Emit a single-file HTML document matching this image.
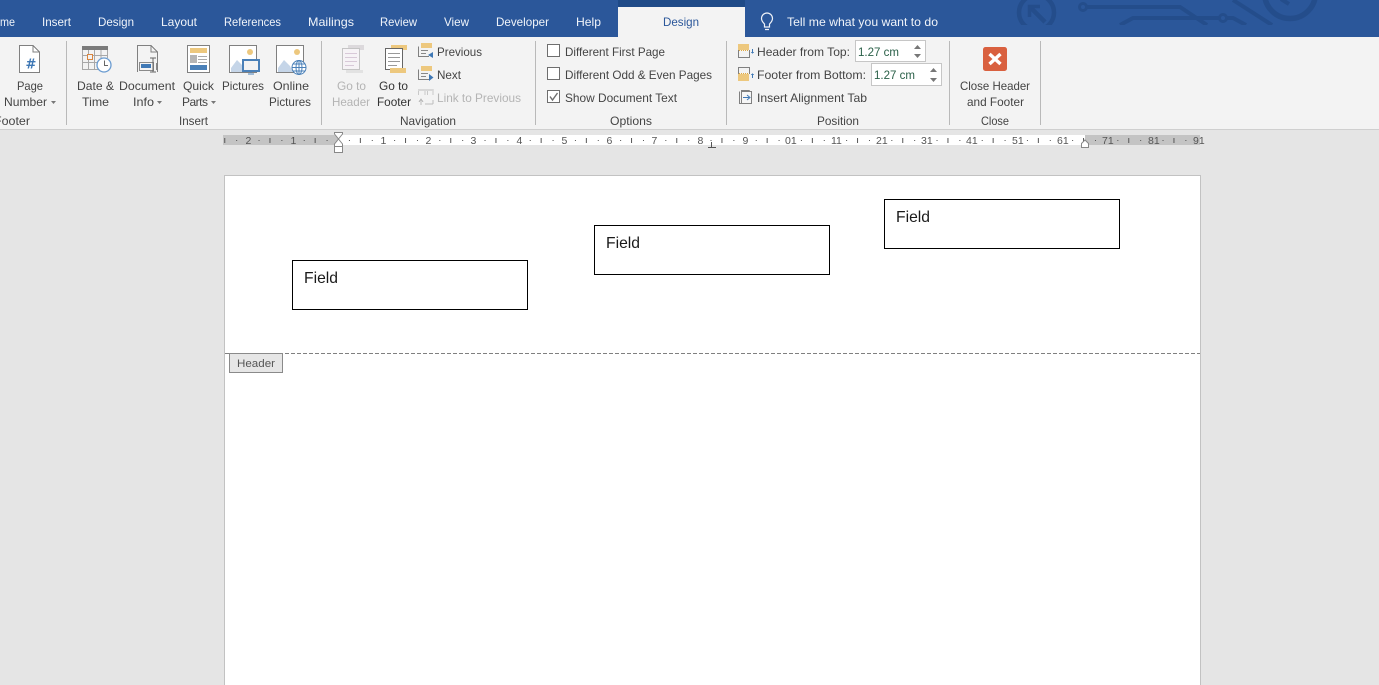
<!DOCTYPE html>
<html><head><meta charset="utf-8"><title>Word</title>
<style>
html,body{margin:0;padding:0;width:1379px;height:685px;overflow:hidden;background:#e5e5e5}
svg{display:block}
text{font-family:"Liberation Sans",sans-serif;font-size:12px;fill:#444}
.t{fill:#f0f4fa}
.g{fill:#b4b4b4}
.r{font-size:10.500px;fill:#555}
.f{font-size:16px;fill:#1a1a1a}
.i{fill:none;stroke:#808080;stroke-width:1}
</style></head><body>
<svg width="1379" height="685" viewBox="0 0 1379 685" xmlns="http://www.w3.org/2000/svg" shape-rendering="crispEdges">
<defs>
<pattern id="tk" width="45.2" height="10" patternUnits="userSpaceOnUse" patternTransform="translate(338 135)">
<rect x="11" y="5" width="1" height="1" fill="#555"/><rect x="22" y="3" width="1" height="5" fill="#555"/><rect x="34" y="5" width="1" height="1" fill="#555"/>
</pattern>
<clipPath id="tb"><rect x="745" y="0" width="634" height="25"/></clipPath>
</defs>
<rect width="1379" height="685" fill="#e5e5e5"/>
<rect width="1379" height="37" fill="#2b579a"/>
<rect x="618" y="0" width="127" height="7" fill="#1f4a87"/>
<rect x="618" y="7" width="127" height="30" fill="#f3f3f3"/>
<g clip-path="url(#tb)" fill="none" stroke="#244d8b" stroke-width="4" shape-rendering="auto">
<circle cx="1036.500" cy="12.500" r="17.500" stroke-width="4.500"/><path d="M1045 22L1031 8" stroke-width="4.500"/><path d="M1029.500 17V6.500H1040" stroke-width="3.500"/>
<circle cx="1083" cy="7" r="3.500" stroke-width="3"/><path d="M1087 7H1180L1207 25M1120 25L1133 18H1219M1227 18H1233L1246 25"/>
<circle cx="1223" cy="18" r="3.500" stroke-width="3"/><path d="M1233 0L1272 25"/>
<circle cx="1290" cy="-7" r="25.500" stroke-width="5.500"/><path d="M1281 -1L1289 4"/>
</g>
<g class="tabs">
<text class="t" x="0" y="26" textLength="15" lengthAdjust="spacingAndGlyphs">me</text>
<text class="t" x="42" y="26" textLength="29" lengthAdjust="spacingAndGlyphs">Insert</text>
<text class="t" x="98" y="26" textLength="36" lengthAdjust="spacingAndGlyphs">Design</text>
<text class="t" x="161" y="26" textLength="36" lengthAdjust="spacingAndGlyphs">Layout</text>
<text class="t" x="224" y="26" textLength="57" lengthAdjust="spacingAndGlyphs">References</text>
<text class="t" x="308" y="26" textLength="46" lengthAdjust="spacingAndGlyphs">Mailings</text>
<text class="t" x="380" y="26" textLength="37" lengthAdjust="spacingAndGlyphs">Review</text>
<text class="t" x="444" y="26" textLength="25" lengthAdjust="spacingAndGlyphs">View</text>
<text class="t" x="496" y="26" textLength="53" lengthAdjust="spacingAndGlyphs">Developer</text>
<text class="t" x="576" y="26" textLength="25" lengthAdjust="spacingAndGlyphs">Help</text>
<text x="663" y="26" textLength="36" lengthAdjust="spacingAndGlyphs" style="fill:#2b579a">Design</text>
<text class="t" x="787" y="26" textLength="151" lengthAdjust="spacingAndGlyphs">Tell me what you want to do</text>
</g>
<g fill="none" stroke="#eef2f8" stroke-width="1.200" shape-rendering="auto"><path d="M764.500 24C762 21.500 761.500 19.500 761.500 18.500A5.500 5.500 0 0 1 772.500 18.500C772.500 19.500 772 21.500 769.500 24V27H764.500ZM765 29.500H769"/></g>

<rect x="0" y="37" width="1379" height="92" fill="#f3f3f3"/>
<rect x="0" y="129" width="1379" height="1" fill="#cfcfcf"/>
<g fill="#b9b9b9">
<rect x="66" y="41" width="1" height="84"/><rect x="321" y="41" width="1" height="84"/><rect x="535" y="41" width="1" height="84"/><rect x="726" y="41" width="1" height="84"/><rect x="949" y="41" width="1" height="84"/><rect x="1040" y="41" width="1" height="84"/>
</g>

<!-- Page Number -->
<path d="M19.500 45.500H33L39.500 52V72.500H19.500Z" fill="#fff" stroke="#808080"/><path class="i" d="M33 45.500V52H39.500"/>
<text x="25.500" y="68.500" style="font-family:'DejaVu Sans',sans-serif;font-size:13px;font-weight:bold;fill:#3f78b5">#</text>
<text x="17" y="90" textLength="26" lengthAdjust="spacingAndGlyphs">Page</text>
<text x="4" y="106" textLength="43" lengthAdjust="spacingAndGlyphs">Number</text>
<path d="M51 101H56L53.500 104Z" fill="#777" shape-rendering="auto"/>
<text x="-6" y="125" textLength="36" lengthAdjust="spacingAndGlyphs">Footer</text>

<!-- Date Time -->
<rect x="82" y="46" width="26" height="4" fill="#7b7b7b"/>
<path d="M82.500 50V69.500H100M107.500 50V58M88.500 50V69M94.500 50V69M101 50V58M82 55.500H108M82 62.500H98" fill="none" stroke="#a8a8a8"/>
<rect x="87.500" y="54.500" width="5" height="5" fill="#f3f3f3" stroke="#d9853f"/>
<circle cx="104" cy="65" r="7" fill="#fff" stroke="#6a9bd0" stroke-width="1.300" shape-rendering="auto"/>
<path d="M104.500 60.500V65.500H108" fill="none" stroke="#666"/>
<text x="77" y="90" textLength="37" lengthAdjust="spacingAndGlyphs">Date &amp;</text>
<text x="82" y="106" textLength="27" lengthAdjust="spacingAndGlyphs">Time</text>

<!-- Doc Info -->
<path class="i" d="M137.500 72V45.500H151L157.500 52V72"/><path class="i" d="M151 45.500V52H157.500"/>
<rect x="139.500" y="62.500" width="14" height="8" fill="none" stroke="#8a8a8a"/><rect x="141" y="64" width="10" height="4" fill="#3f78b5"/>
<path d="M150 58H156M153 58V72M150 72H156" fill="none" stroke="#666"/><rect x="156" y="63" width="1" height="7" fill="#888"/>
<text x="119" y="90" textLength="56" lengthAdjust="spacingAndGlyphs">Document</text>
<text x="133" y="106" textLength="21" lengthAdjust="spacingAndGlyphs">Info</text>
<path d="M157 101H162L159.500 104Z" fill="#777" shape-rendering="auto"/>

<!-- Quick Parts -->
<rect x="187.500" y="45.500" width="22" height="27" fill="#fff" stroke="#808080"/>
<rect x="190" y="48" width="17" height="5" fill="#edc87e"/>
<rect x="190" y="55" width="7" height="8" fill="#b5b5b5"/>
<path d="M198 56.500H207M198 59.500H207M198 62.500H207" stroke="#aaa" fill="none"/>
<rect x="190" y="65" width="17" height="5" fill="#4a80b8"/>
<text x="183" y="90" textLength="31" lengthAdjust="spacingAndGlyphs">Quick</text>
<text x="182" y="106" textLength="26" lengthAdjust="spacing">Parts</text>
<path d="M211 101H216L213.500 104Z" fill="#777" shape-rendering="auto"/>

<!-- Pictures -->
<rect x="229.500" y="45.500" width="27" height="27" fill="#fff" stroke="#808080"/>
<circle cx="250" cy="52" r="3" fill="#edc87e" shape-rendering="auto"/>
<path d="M231 72V68L237 60L243 66L246 72Z" fill="#c5d5e8" shape-rendering="auto"/>
<rect x="243" y="60" width="16" height="11" fill="#f3f3f3" stroke="#4a80b8" stroke-width="2"/>
<path d="M251 71V73M248 74H254" stroke="#4a80b8" fill="none"/>
<text x="222" y="90" textLength="42" lengthAdjust="spacingAndGlyphs">Pictures</text>

<!-- Online -->
<rect x="276.500" y="45.500" width="27" height="27" fill="#fff" stroke="#808080"/>
<circle cx="297" cy="52" r="3" fill="#edc87e" shape-rendering="auto"/>
<path d="M278 72V68L284 60L290 66L293 72Z" fill="#c5d5e8" shape-rendering="auto"/>
<g fill="#fff" stroke="#4a80b8" shape-rendering="auto"><circle cx="299" cy="67.500" r="7"/><ellipse cx="299" cy="67.500" rx="3" ry="7"/><path d="M292 67.500H306M293 64H305M293 71H305M299 60.500V74.500"/></g>
<text x="273" y="90" textLength="36" lengthAdjust="spacingAndGlyphs">Online</text>
<text x="269" y="106" textLength="42" lengthAdjust="spacingAndGlyphs">Pictures</text>

<!-- Go to Header -->
<rect x="348" y="45" width="16" height="5" fill="#dcd9dc"/>
<rect x="342.500" y="48.500" width="17" height="21" fill="#f6f3f6" stroke="#c4c4c4"/>
<path d="M345 53.500H357M345 57.500H357M345 61.500H357M345 65.500H354" stroke="#d8c9d8" fill="none"/>
<rect x="346" y="70" width="17" height="3" fill="#e2e2e2"/>
<text class="g" x="337" y="90" textLength="29" lengthAdjust="spacingAndGlyphs">Go to</text>
<text class="g" x="332" y="106" textLength="38" lengthAdjust="spacingAndGlyphs">Header</text>

<!-- Go to Footer -->
<rect x="391" y="45" width="16" height="5" fill="#edc87e"/>
<rect x="385.500" y="48.500" width="17" height="21" fill="#fff" stroke="#666"/>
<path d="M388 53.500H400M388 57.500H400M388 61.500H400M388 65.500H397" stroke="#999" fill="none"/>
<rect x="390" y="68" width="16" height="5" fill="#edc87e"/>
<text x="379" y="90" textLength="29" lengthAdjust="spacingAndGlyphs" style="fill:#333">Go to</text>
<text x="377" y="106" textLength="34" lengthAdjust="spacingAndGlyphs" style="fill:#333">Footer</text>

<!-- Previous Next Link -->
<path class="i" d="M418.500 46.500V56.500H429"/><rect x="421" y="43" width="11" height="5" fill="#edc87e"/>
<path d="M421 50.500H428M421 53.500H426" stroke="#888" fill="none"/>
<path d="M433 52V58L428 55Z" fill="#3f78b5" shape-rendering="auto"/>
<text x="437" y="56" textLength="45" lengthAdjust="spacingAndGlyphs">Previous</text>
<path class="i" d="M418.500 69.500V79.500H429"/><rect x="421" y="66" width="11" height="5" fill="#edc87e"/>
<path d="M421 73.500H428M421 76.500H426" stroke="#888" fill="none"/>
<path d="M429 74V81L433.500 77.500Z" fill="#3f78b5" shape-rendering="auto"/>
<text x="437" y="79" textLength="24" lengthAdjust="spacingAndGlyphs">Next</text>
<path d="M418.500 95V89.500H425V95M427.500 95V89.500H433V95" fill="none" stroke="#c9c9c9"/>
<rect x="418" y="89" width="15" height="2" fill="#d8d8d8"/>
<path d="M421 105V100M419 102L421 99L423 102M425 104H433M433 100V104" fill="none" stroke="#bdbdbd"/>
<text class="g" x="437" y="102" textLength="84" lengthAdjust="spacingAndGlyphs">Link to Previous</text>

<text x="400" y="125" textLength="56" lengthAdjust="spacingAndGlyphs">Navigation</text>
<text x="179" y="125" textLength="29" lengthAdjust="spacingAndGlyphs">Insert</text>

<!-- Options -->
<rect x="547.500" y="44.500" width="12" height="12" fill="#fff" stroke="#6e6e6e"/>
<rect x="547.500" y="67.500" width="12" height="12" fill="#fff" stroke="#6e6e6e"/>
<rect x="547.500" y="90.500" width="12" height="12" fill="#fff" stroke="#6e6e6e"/>
<path d="M550 96.500L552.500 100L557.500 93" fill="none" stroke="#6e6e6e" stroke-width="1.400" shape-rendering="auto"/>
<text x="565" y="56" textLength="100" lengthAdjust="spacingAndGlyphs">Different First Page</text>
<text x="565" y="79" textLength="147" lengthAdjust="spacingAndGlyphs">Different Odd &amp; Even Pages</text>
<text x="565" y="102" textLength="112" lengthAdjust="spacingAndGlyphs">Show Document Text</text>
<text x="610" y="125" textLength="42" lengthAdjust="spacingAndGlyphs">Options</text>

<!-- Position -->
<rect x="738" y="44" width="11" height="6" fill="#edc87e"/>
<path d="M738.500 50V57.500H749.500V50" fill="none" stroke="#808080"/><path d="M739 50.500H749" stroke="#e2a93f" stroke-dasharray="1 1" fill="none"/>
<path d="M752.500 49V53" stroke="#3f78b5" fill="none"/><path d="M751 52H754L752.500 54Z" fill="#3f78b5"/>
<text x="757" y="56" textLength="93" lengthAdjust="spacingAndGlyphs">Header from Top:</text>
<rect x="855.500" y="40.500" width="70" height="21" fill="#fff" stroke="#c6c6c6"/>
<text x="858" y="56" textLength="41" lengthAdjust="spacingAndGlyphs" style="fill:#2a6048">1.27 cm</text>
<path d="M914 49H921L917.500 45ZM914 54H921L917.500 58Z" fill="#777" shape-rendering="auto"/>
<rect x="738" y="74" width="11" height="7" fill="#edc87e"/>
<path d="M738.500 74V67.500H749.500V74" fill="none" stroke="#808080"/><path d="M739 73.500H749" stroke="#e2a93f" stroke-dasharray="1 1" fill="none"/>
<path d="M752.500 74V78" stroke="#3f78b5" fill="none"/><path d="M751 75H754L752.500 73Z" fill="#3f78b5"/>
<text x="757" y="79" textLength="109" lengthAdjust="spacingAndGlyphs">Footer from Bottom:</text>
<rect x="871.500" y="63.500" width="70" height="22" fill="#fff" stroke="#c6c6c6"/>
<text x="874" y="79" textLength="41" lengthAdjust="spacingAndGlyphs" style="fill:#2a6048">1.27 cm</text>
<path d="M930 72H937L933.500 68ZM930 78H937L933.500 82Z" fill="#777" shape-rendering="auto"/>
<path class="i" d="M739.500 91.500V103.500H751.500V93L749 90.500H741.500V91.500"/>
<rect x="741.500" y="91.500" width="10" height="12" fill="#f6f6f6" stroke="#808080"/>
<path d="M743 97.500H749" stroke="#3f78b5" stroke-width="1.300" fill="none"/><path d="M747 95L750 97.500L747 100" fill="none" stroke="#3f78b5" shape-rendering="auto"/>
<text x="757" y="102" textLength="110" lengthAdjust="spacingAndGlyphs">Insert Alignment Tab</text>
<text x="817" y="125" textLength="42" lengthAdjust="spacingAndGlyphs">Position</text>

<!-- Close -->
<rect x="983" y="47" width="24" height="24" rx="2.500" fill="#d9603f" shape-rendering="auto"/>
<path d="M989.500 54L1000.500 64M1000.500 54L989.500 64" stroke="#fff" stroke-width="3.400" fill="none" shape-rendering="auto"/>
<text x="960" y="90" textLength="70" lengthAdjust="spacingAndGlyphs">Close Header</text>
<text x="967" y="106" textLength="57" lengthAdjust="spacingAndGlyphs">and Footer</text>
<text x="981" y="125" textLength="28" lengthAdjust="spacingAndGlyphs">Close</text>

<!-- Ruler -->
<rect x="223" y="135" width="115" height="10" fill="#c4c4c4"/>
<rect x="338" y="135" width="747" height="10" fill="#fff"/>
<rect x="1085" y="135" width="115" height="10" fill="#c4c4c4"/>
<rect x="223" y="135" width="977" height="10" fill="url(#tk)"/>
<g class="rul">
<text class="r" x="245.500" y="144">2</text><text class="r" x="290.500" y="144">1</text>
<text class="r" x="380.500" y="144">1</text><text class="r" x="425.500" y="144">2</text><text class="r" x="470.500" y="144">3</text><text class="r" x="516.500" y="144">4</text><text class="r" x="561.500" y="144">5</text><text class="r" x="606.500" y="144">6</text><text class="r" x="651.500" y="144">7</text><text class="r" x="697.500" y="144">8</text><text class="r" x="742.500" y="144">9</text>
<text class="r" x="785" y="144">01</text><text class="r" x="831" y="144">11</text><text class="r" x="876" y="144">21</text><text class="r" x="921" y="144">31</text><text class="r" x="966" y="144">41</text><text class="r" x="1012" y="144">51</text><text class="r" x="1057" y="144">61</text><text class="r" x="1102" y="144">71</text><text class="r" x="1148" y="144">81</text><text class="r" x="1193" y="144">91</text>
</g>
<path d="M334.500 132.500H342.500V134L338.500 139L342.500 144V146.500H334.500V144L338.500 139L334.500 134Z" fill="#fff" stroke="#888" shape-rendering="auto"/>
<rect x="334.500" y="146.500" width="8" height="6" fill="#fff" stroke="#888"/>
<path d="M711.500 142V147M708 147.500H716" stroke="#555" fill="none"/>
<path d="M1081.500 147.500V143.500L1085 140L1088.500 143.500V147.500Z" fill="#fff" stroke="#888" shape-rendering="auto"/>

<!-- Page -->
<rect x="224.500" y="175.500" width="976" height="520" fill="#fff" stroke="#c2c2c2"/>
<path d="M225 353.500H1200" stroke="#808080" stroke-dasharray="4 2" fill="none"/>
<rect x="229.500" y="353.500" width="53" height="19" fill="#e6e6e6" stroke="#8a8a8a"/>
<text x="237" y="367" textLength="38" lengthAdjust="spacingAndGlyphs" style="font-size:11px;fill:#555">Header</text>
<rect x="292.500" y="260.500" width="235" height="49" fill="#fff" stroke="#000"/>
<text class="f" x="304" y="283" textLength="34" lengthAdjust="spacingAndGlyphs">Field</text>
<rect x="594.500" y="225.500" width="235" height="49" fill="#fff" stroke="#000"/>
<text class="f" x="606" y="248" textLength="34" lengthAdjust="spacingAndGlyphs">Field</text>
<rect x="884.500" y="199.500" width="235" height="49" fill="#fff" stroke="#000"/>
<text class="f" x="896" y="222" textLength="34" lengthAdjust="spacingAndGlyphs">Field</text>
</svg>
</body></html>
